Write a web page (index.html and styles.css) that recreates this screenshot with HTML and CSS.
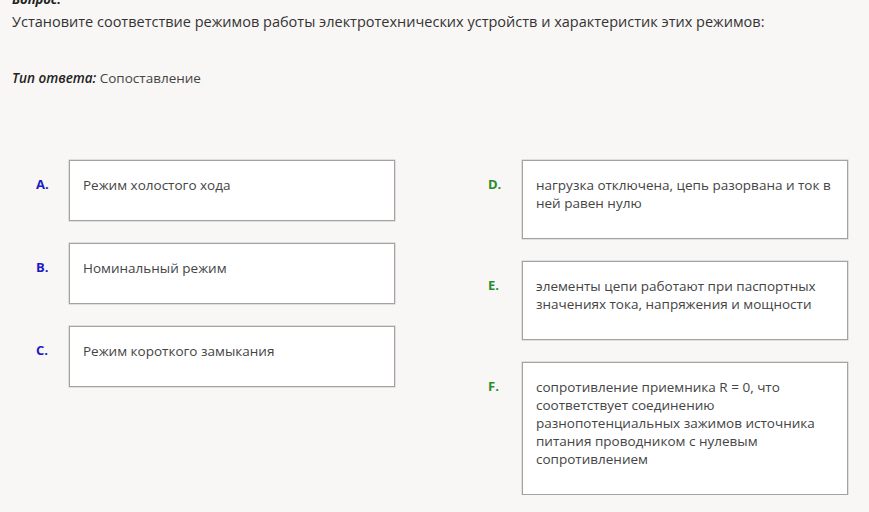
FILE: index.html
```html
<!DOCTYPE html>
<html>
  <head>
    <title>Вопрос</title>
    <link rel="stylesheet" href="styles.css">
  </head>

  <body>
    <div id="container">
      <div class="caption">Вопрос:</div>
      <div class="question">
        Установите соответствие режимов работы электротехнических устройств и характеристик этих режимов:
      </div>
      <div class="answer-type"><b>Тип ответа:</b> Сопоставление</div>

      <div class="match">
        <!-- left column -->
        <div class="column">
          <div class="item">
            <div class="letter left">A.</div>
            <div class="box">Режим холостого хода</div>
          </div>
          <div class="item">
            <div class="letter left">B.</div>
            <div class="box">Номинальный режим</div>
          </div>
          <div class="item">
            <div class="letter left">C.</div>
            <div class="box">Режим короткого замыкания</div>
          </div>
        </div>

        <!-- right column -->
        <div class="column">
          <div class="item">
            <div class="letter right">D.</div>
            <div class="box">нагрузка отключена, цепь разорвана и ток в ней равен нулю</div>
          </div>
          <div class="item">
            <div class="letter right">E.</div>
            <div class="box">элементы цепи работают при паспортных значениях тока, напряжения и мощности</div>
          </div>
          <div class="item">
            <div class="letter right">F.</div>
            <div class="box">
              сопротивление приемника R = 0, что соответствует соединению разнопотенциальных зажимов источника питания проводником с нулевым сопротивлением
            </div>
          </div>
        </div>
      </div>
    </div>
  </body>
</html>
```

FILE: styles.css
```css
body {
  margin: 0;
  background: #f8f7f5;
  font-family: "Open Sans", "Noto Sans", sans-serif;
  color: #333;
}

#container {
  padding: 0 12px;
}

.caption {
  font-size: 13px;
  font-weight: 700;
  font-style: italic;
  line-height: 18px;
  margin-top: -10px;
  color: #222;
}

.question {
  font-size: 14.5px;
  line-height: 20px;
  margin-top: 4px;
  color: #333;
}

.answer-type {
  font-size: 13.5px;
  line-height: 18px;
  margin-top: 37px;
  color: #444;
}

.answer-type b {
  font-style: italic;
  font-weight: 600;
  color: #222;
}

.match {
  display: flex;
  gap: 93px;
  padding-left: 24px;
  margin-top: 73px;
}

.column {
  display: flex;
  flex-direction: column;
  gap: 22px;
}

.item {
  display: flex;
  align-items: flex-start;
}

.letter {
  width: 33px;
  font-size: 13px;
  font-weight: 700;
  line-height: 18px;
  padding-top: 15px;
}

.letter.left {
  color: #1c1cc4;
}

.letter.right {
  width: 34px;
  color: #2a8c2a;
}

.box {
  width: 298px;
  padding: 15px 13px 26px;
  background: #fff;
  border: 1px solid #a3a3a3;
  box-shadow: 0 0 0 0.5px #c8c8c8;
  font-size: 13.5px;
  line-height: 18px;
  color: #444;
}
```
